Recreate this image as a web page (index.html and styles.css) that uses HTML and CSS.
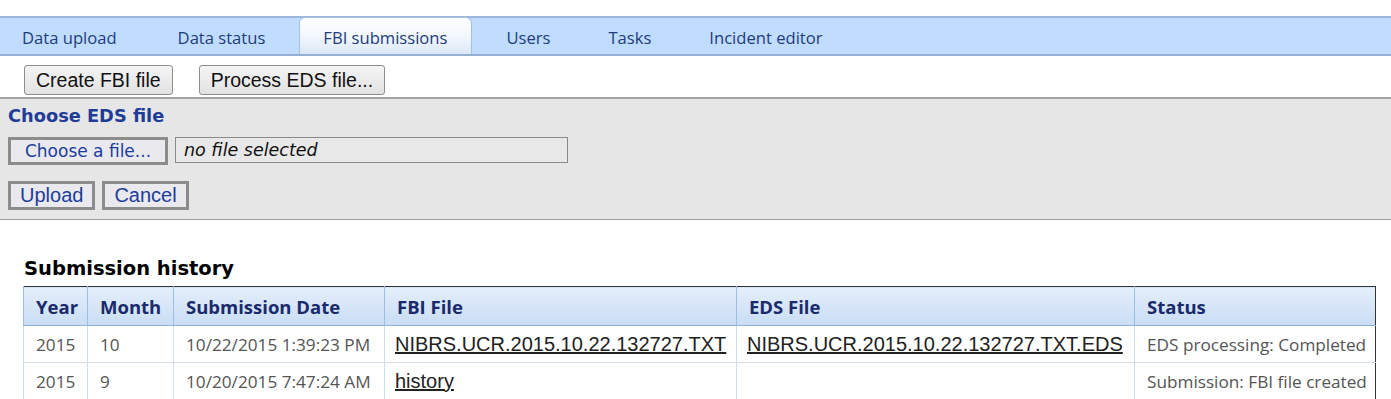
FILE: index.html
```html
<!DOCTYPE html>
<html lang="en">
<head>
    <meta charset="UTF-8">
    <meta name="viewport" content="width=device-width, initial-scale=1.0">
    <title>FBI submissions</title>
    <link rel="stylesheet" href="styles.css">
</head>
<body>
    <div class="tabs">
        <a class="tab" href="#">Data upload</a>
        <a class="tab" href="#">Data status</a>
        <a class="tab active" href="#">FBI submissions</a>
        <a class="tab" href="#">Users</a>
        <a class="tab" href="#">Tasks</a>
        <a class="tab" href="#">Incident editor</a>
    </div>

    <div class="toolbar">
        <button class="btn">Create FBI file</button>
        <button class="btn">Process EDS file...</button>
    </div>

    <div class="panel">
        <div class="panel-title">Choose EDS file</div>
        <div class="file-row">
            <button class="file-btn">Choose a file...</button>
            <div class="file-name">no file selected</div>
        </div>
        <div class="actions">
            <button class="action-btn">Upload</button>
            <button class="action-btn">Cancel</button>
        </div>
    </div>

    <h2 class="history-title">Submission history</h2>
    <table class="history">
        <thead>
            <tr>
                <th class="col-year">Year</th>
                <th class="col-month">Month</th>
                <th class="col-date">Submission Date</th>
                <th class="col-fbi">FBI File</th>
                <th class="col-eds">EDS File</th>
                <th class="col-status">Status</th>
            </tr>
        </thead>
        <tbody>
            <tr>
                <td>2015</td>
                <td>10</td>
                <td>10/22/2015 1:39:23 PM</td>
                <td><a href="#">NIBRS.UCR.2015.10.22.132727.TXT</a></td>
                <td><a href="#">NIBRS.UCR.2015.10.22.132727.TXT.EDS</a></td>
                <td>EDS processing: Completed</td>
            </tr>
            <tr>
                <td>2015</td>
                <td>9</td>
                <td>10/20/2015 7:47:24 AM</td>
                <td><a href="#">history</a></td>
                <td></td>
                <td>Submission: FBI file created</td>
            </tr>
        </tbody>
    </table>
</body>
</html>
```

FILE: styles.css
```css
body {
    margin: 0;
    padding: 16px 0 0 0;
    background-color: #ffffff;
    font-family: "Open Sans", "Noto Sans", sans-serif;
}

/* tab strip */
.tabs {
    display: flex;
    align-items: flex-end;
    gap: 10px;
    height: 36px;
    background-color: #c0dcff;
    border-top: 2px solid #9cb7da;
    border-bottom: 2px solid #93afd2;
}

.tab {
    display: flex;
    align-items: center;
    height: 36px;
    padding: 3px 24px 0;
    font-size: 16.6px;
    color: #223c7c;
    text-decoration: none;
    box-sizing: border-box;
}

.tab:first-child {
    margin-left: -2px;
}

.tab:nth-child(2) {
    margin-left: 3px;
}

.tab.active {
    height: 37px;
    background: linear-gradient(#fefeff, #f3f7fd 50%, #dbe7f7);
    border: 1px solid #a6c0e0;
    border-bottom: none;
    border-radius: 6px 6px 0 0;
    padding: 2px 24px 0 23px;
}

/* top buttons */
.toolbar {
    display: flex;
    gap: 26px;
    padding: 9px 24px 2px;
}

.btn {
    height: 30px;
    padding: 0 11px;
    font-family: "Liberation Sans", Arial, sans-serif;
    font-size: 19.5px;
    color: #111;
    background: linear-gradient(#f4f4f4, #e2e2e2);
    border: 1px solid #8e8e8e;
    border-radius: 3px;
}

/* upload panel */
.panel {
    background-color: #e6e6e6;
    border-top: 2px solid #a3a3a3;
    border-bottom: 1px solid #9d9d9d;
    padding: 6px 8px 9px;
}

.panel-title {
    font-family: "DejaVu Sans", Verdana, sans-serif;
    font-weight: bold;
    font-size: 17.8px;
    line-height: 22px;
    color: #1f3c96;
    margin-bottom: 10px;
}

.file-row {
    display: flex;
    gap: 7px;
    align-items: flex-start;
    margin-bottom: 16px;
}

.file-btn {
    height: 28px;
    width: 160px;
    padding: 0;
    font-family: "DejaVu Sans", Verdana, sans-serif;
    font-size: 17px;
    color: #1c3d9c;
    background-color: #e9e9ee;
    border: 3px solid #8c8c8c;
}

.file-name {
    width: 393px;
    height: 26px;
    box-sizing: border-box;
    padding-left: 8px;
    display: flex;
    align-items: center;
    font-family: "DejaVu Sans", Verdana, sans-serif;
    font-style: italic;
    font-size: 17.5px;
    color: #111;
    background-color: #e8e8e8;
    border: 1px solid #8a8a8a;
}

.actions {
    display: flex;
    gap: 7px;
}

.action-btn {
    height: 29px;
    padding: 0 9px;
    font-family: "Liberation Sans", Arial, sans-serif;
    font-size: 20px;
    color: #1c3d9c;
    background-color: #e9e9ee;
    border: 3px solid #8c8c8c;
}

/* history table */
.history-title {
    margin: 37px 0 5px 24px;
    font-family: "DejaVu Sans", Verdana, sans-serif;
    font-size: 19.5px;
    line-height: 24px;
    color: #000;
}

.history {
    width: 1353px;
    margin-left: 23px;
    border-collapse: collapse;
    table-layout: fixed;
    border: 1px solid #333;
}

.history th {
    height: 38px;
    padding: 0 12px;
    text-align: left;
    font-size: 18.5px;
    font-weight: bold;
    color: #1a2a6c;
    background: linear-gradient(#e4eefb, #c9ddf4);
    border-left: 1px solid #9fbde2;
    border-bottom: 1px solid #8fb0d8;
    white-space: nowrap;
}

.history td {
    height: 36px;
    padding: 0 12px;
    font-size: 17.2px;
    color: #555;
    border-left: 1px solid #d3deec;
    border-bottom: 1px solid #d3deec;
    white-space: nowrap;
}

.history td a {
    font-family: "Liberation Sans", Arial, sans-serif;
    font-size: 20px;
    color: #222;
    margin-left: -2px;
}

.col-year { width: 39px; }
.col-month { width: 61px; }
.col-date { width: 186px; }
.col-fbi { width: 327px; }
.col-eds { width: 373px; }
```
